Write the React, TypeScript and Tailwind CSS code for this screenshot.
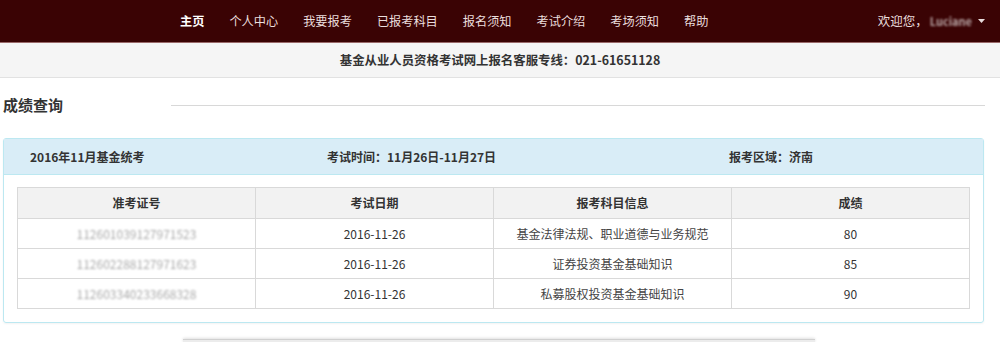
import React from 'react';

const navItems = ['主页', '个人中心', '我要报考', '已报考科目', '报名须知', '考试介绍', '考场须知', '帮助'];

const rows = [
  { id: '112601039127971523', date: '2016-11-26', subject: '基金法律法规、职业道德与业务规范', score: '80' },
  { id: '112602288127971623', date: '2016-11-26', subject: '证券投资基金基础知识', score: '85' },
  { id: '112603340233668328', date: '2016-11-26', subject: '私募股权投资基金基础知识', score: '90' },
];

export default function App() {
  return (
    <div
      className="w-[1000px] h-[342px] overflow-hidden bg-white text-[#333]"
      style={{ fontFamily: '"Noto Sans CJK SC", "Noto Sans", sans-serif' }}
    >
      <nav className="h-[43px] bg-[#3a0304] border-b border-[#9a6a6a] flex items-center">
        <ul className="flex items-center ml-[180px] gap-[25px] text-[12.2px] text-[#eadede]">
          {navItems.map((item, i) => (
            <li key={item} className={i === 0 ? 'font-bold text-white' : ''}>
              {item}
            </li>
          ))}
        </ul>
        <div className="ml-auto mr-[15px] flex items-center text-[12.5px] text-[#eadede]">
          <span>欢迎您，</span>
          <span className="ml-[2px] blur-[1.2px] text-[#b9a6a6] font-bold text-[11px]">Luciane</span>
          <svg className="ml-[6px]" width="7" height="4" viewBox="0 0 7 4">
            <path d="M0 0h7L3.5 4z" fill="#e8dcdc" />
          </svg>
        </div>
      </nav>

      <div className="h-[35px] bg-[#f5f5f5] border-b border-[#e2e2e2] flex items-center justify-center text-[12.4px] font-bold text-[#333]">
        基金从业人员资格考试网上报名客服专线：021-61651128
      </div>

      <div className="flex items-center h-[54px] pl-[3px] pr-[15px]">
        <h2 className="text-[15px] font-bold text-[#333] w-[168px]">成绩查询</h2>
        <div className="flex-1 border-t border-[#d8d8d8]" />
      </div>

      <div className="mx-[3px] mr-[16px] mt-[6px] border border-[#bce8f1] rounded-[3px] shadow-[0_1px_2px_rgba(0,0,0,0.05)]">
        <div className="h-[36px] bg-[#d9edf7] flex items-center text-[12px] font-bold text-[#333] border-b border-[#bce8f1]">
          <span className="ml-[26px] w-[297px]">2016年11月基金统考</span>
          <span className="w-[402px]">考试时间：11月26日-11月27日</span>
          <span>报考区域：济南</span>
        </div>
        <div className="px-[13px] pt-[12px] pb-[13px]">
          <table className="w-full border-collapse text-[12px] table-fixed">
            <thead>
              <tr className="bg-[#f2f2f2] h-[31px]">
                {['准考证号', '考试日期', '报考科目信息', '成绩'].map((h) => (
                  <th key={h} className="border border-[#d9d9d9] font-bold text-[#333]">
                    {h}
                  </th>
                ))}
              </tr>
            </thead>
            <tbody>
              {rows.map((r) => (
                <tr key={r.id} className="h-[30px] text-center">
                  <td className="border border-[#d9d9d9]">
                    <span className="text-[#aaa] blur-[0.8px]">{r.id}</span>
                  </td>
                  <td className="border border-[#d9d9d9]">{r.date}</td>
                  <td className="border border-[#d9d9d9] text-[#444]">{r.subject}</td>
                  <td className="border border-[#d9d9d9]">{r.score}</td>
                </tr>
              ))}
            </tbody>
          </table>
        </div>
      </div>

      <div className="mt-[16px] ml-[183px] w-[632px] h-[4px] border-t border-[#d0d0d0] bg-[#ececec] shadow-[0_-1px_3px_rgba(0,0,0,0.12)]" />
    </div>
  );
}
